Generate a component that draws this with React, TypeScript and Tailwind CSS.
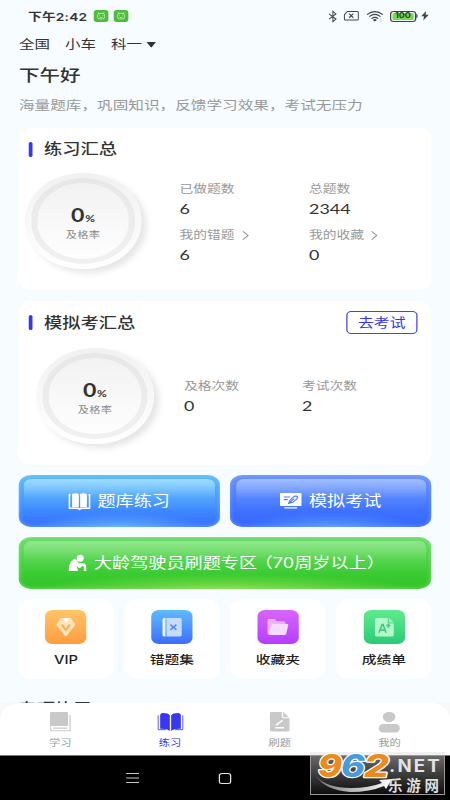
import type { ReactNode } from "react";

/* Drawing surface whose viewBox stretches to the size given by className. */
function Art({ box, className, children }: { box: string; className: string; children: ReactNode }) {
  return (
    <svg viewBox={box} preserveAspectRatio="none" fill="none" className={`block shrink-0 overflow-visible ${className}`}>
      {children}
    </svg>
  );
}

function StatusBar() {
  return (
    <div className="flex h-8 items-center pl-[22.4px] pr-[17px] text-[#333]">
      <span className="w-[48px] whitespace-nowrap pt-[2px] text-[11px] font-semibold leading-4 tracking-[0.15px]">下午2:42</span>
      {[0, 1].map((i) => (
        <Art key={i} box="0 0 44 36" className="ml-[4.4px] h-3 w-[11.7px]">
          <rect width="44" height="36" rx="9" fill="#4dbb3c" />
          <rect x="11" y="10" width="22" height="17" rx="7" stroke="#c9f5c0" strokeWidth="2.4" />
          <path d="M12 7l5 4M32 7l-5 4M17 16v3M27 16v3M18 22l4 1 4-1" stroke="#c9f5c0" strokeWidth="2.4" />
        </Art>
      ))}
      <div className="flex-1" />
      <Art box="0 0 24 34" className="h-[11px] w-[6.6px]">
        <path d="M1 9l20 16-9 8V1l9 8L1 25" stroke="#444" strokeWidth="3" />
      </Art>
      <Art box="0 0 46 28" className="ml-[5.4px] h-[9.4px] w-[12.2px]">
        <path d="M11 1.5h30q3 0 3 3v19q0 3-3 3H5q-3 0-3-3V11z" stroke="#444" strokeWidth="3" />
        <path d="M16 8l13 12M29 8L16 20" stroke="#444" strokeWidth="3.4" />
      </Art>
      <Art box="0 0 52 32" className="ml-[5.2px] h-[10.6px] w-[13.8px]">
        <path d="M2 11Q26-7 50 11M9 17Q26 4 43 17M16 23Q26 15 36 23" stroke="#444" strokeWidth="3.6" />
        <path d="M20 27q6-5 12 0l-6 5z" fill="#444" />
        <path d="M44 23v8M41 29l3 3 3-3" stroke="#aaa" strokeWidth="1.5" />
      </Art>
      <div className="ml-[5.4px] flex h-[11px] w-[20.6px] items-center justify-center rounded-[3px] border border-[#444] p-px">
        <div className="flex h-full w-full items-center justify-center rounded-[1.5px] bg-[#78d653] text-[7.2px] font-bold leading-none text-[#234a16]">100</div>
      </div>
      <div className="h-1 w-[1.6px] rounded-r bg-[#444]" />
      <Art box="0 0 22 28" className="ml-[2.8px] h-[9.4px] w-[6px]">
        <path d="M14 0L0 16h8L6 28 22 11h-9z" fill="#444" />
      </Art>
    </div>
  );
}

function Dial() {
  return (
    <div className="h-24 w-[93.6px] shrink-0 rounded-full bg-linear-to-b from-[#f1f1f1] to-white p-[5px] shadow-[4px_4px_6px_rgba(0,0,0,0.1)]">
      <div className="h-full w-full rounded-full bg-linear-to-b from-[#e7e7e7] to-[#f1f1f1] p-[5px]">
        <div className="flex h-full w-full flex-col items-center rounded-full bg-linear-to-b from-[#f2f2f2] to-[#fefefe] pt-[23px]">
          <div className="flex h-[18px] items-baseline font-[Lato] leading-[18px] text-[#333]">
            <span className="text-[18.5px] font-bold">0</span>
            <span className="ml-[0.5px] text-[9.5px] font-bold">%</span>
          </div>
          <div className="mt-[4px] text-[9px] leading-[14px] tracking-[0.2px] text-[#888]">及格率</div>
        </div>
      </div>
    </div>
  );
}

function Stat({ label, value, link }: { label: string; value: string; link?: boolean }) {
  return (
    <div>
      <div className="flex h-5 items-center text-[11px] leading-5 text-[#999]">
        {label}
        {link && (
          <Art box="0 0 18 28" className="ml-[6px] h-[9px] w-[5px]">
            <path d="M1 1l15 13L1 27" stroke="#999" strokeWidth="3.2" />
          </Art>
        )}
      </div>
      <div className="h-5 font-[Lato] text-[14.3px] leading-5 text-[#333]">{value}</div>
    </div>
  );
}

function CardTitle({ children }: { children: ReactNode }) {
  return (
    <div className="flex items-center">
      <div className="h-[15px] w-[2.8px] rounded-[1.5px] bg-[#3737ee]" />
      <h2 className="ml-[9.4px] text-[14.6px] font-medium leading-5 text-[#333]">{children}</h2>
    </div>
  );
}

function Glossy({ base, sheen, glow, rim, className, children }: { base: string; sheen: string; glow: string; rim: string; className: string; children: ReactNode }) {
  return (
    <div className={`relative flex h-[52px] items-center overflow-hidden rounded-[10px] text-white ${base} ${className}`}>
      <div className={`absolute inset-x-0 bottom-0 h-4 ${glow}`} />
      <div className={`absolute inset-0 rounded-[10px] ${rim}`} />
      <div className={`absolute inset-x-[4.5px] bottom-[6px] top-[4px] rounded-[6px] ${sheen}`} />
      <div className="relative flex items-center whitespace-nowrap text-[14.5px] leading-5">{children}</div>
    </div>
  );
}

function Tile({ label, tint, children }: { label: string; tint: string; children: ReactNode }) {
  return (
    <div className="flex h-20 flex-col items-center rounded-[11px] bg-white pt-[11px]">
      <div className={`flex h-[34px] w-[33px] items-center justify-center rounded-[6px] bg-linear-to-b ${tint}`}>{children}</div>
      <div className="mt-[6px] text-[11.8px] font-medium leading-5 text-[#222]">{label}</div>
    </div>
  );
}

function Tab({ label, active, children }: { label: string; active?: boolean; children: ReactNode }) {
  return (
    <div className={`flex w-[87.8px] flex-col items-center ${active ? "text-[#3737ee]" : "text-[#999]"}`}>
      <div className="flex h-[22px] items-center">{children}</div>
      <div className="mt-[3px] text-[9px] leading-[14px]">{label}</div>
    </div>
  );
}

function Watermark() {
  return (
    <svg viewBox="0 0 136 44" className="absolute left-[310px] top-[752px] h-[44px] w-[136px] overflow-visible">
      <defs>
        <linearGradient id="plate" x1="0" y1="0" x2="0" y2="1">
          <stop offset="0" stopColor="#6a6a6a" />
          <stop offset="1" stopColor="#0c0c0c" />
        </linearGradient>
        <linearGradient id="swoosh" x1="0" y1="0" x2="1" y2="0">
          <stop offset="0" stopColor="#777" />
          <stop offset="1" stopColor="#fff" />
        </linearGradient>
      </defs>
      <rect x="0.5" y="3.5" width="134" height="39" fill="url(#plate)" stroke="#999" />
      <rect x="0" y="0" width="135" height="3" fill="#f0f0f0" />
      <path d="M0 25Q10 37 35 37Q53 37 66 32L63 29L76 28L70 38L68 35Q54 41 34 41Q9 39 0 25z" fill="url(#swoosh)" transform="translate(6 -1)" />
      <g fontFamily="Inter" fontWeight="800" fontStyle="italic" fontSize="31" stroke="#fff" strokeWidth="2.4" paintOrder="stroke" strokeLinejoin="round">
        <text x="8" y="25" textLength="24" lengthAdjust="spacingAndGlyphs" fill="#ee8a1d">9</text>
        <text x="31" y="25" textLength="24" lengthAdjust="spacingAndGlyphs" fill="#4a9bd9">6</text>
        <text x="54" y="25" textLength="25" lengthAdjust="spacingAndGlyphs" fill="#ee8a1d">2</text>
      </g>
      <text x="79" y="20" textLength="53" lengthAdjust="spacingAndGlyphs" fontFamily="Inter" fontWeight="700" fontSize="17" letterSpacing="2" fill="#e3e3e3">.NET</text>
      <text x="78" y="38.5" textLength="51" fontFamily="Noto Sans CJK SC" fontWeight="700" fontSize="14.5" fill="#dedede">乐游网</text>
    </svg>
  );
}

export default function App() {
  return (
    <div className="relative h-[800px] w-[450px] overflow-hidden bg-[#f6fcff] font-[Inter,'Noto_Sans_CJK_SC',sans-serif]">
      <div className="flex h-[800px] w-[360px] origin-top-left scale-x-125 flex-col">
        <StatusBar />
        <header className="px-[15.2px] text-[#333]">
          <div className="flex h-[26px] items-center text-[12.4px] leading-[26px]">
            <span>全国</span>
            <span className="ml-[12px]">小车</span>
            <span className="ml-[12px]">科一</span>
            <Art box="0 0 30 16" className="ml-[3px] h-[5.4px] w-[8px]">
              <path d="M1 0h28L17 15q-2 2-4 0z" fill="#333" />
            </Art>
          </div>
          <h1 className="h-[34px] text-[16.4px] font-medium leading-[34px]">下午好</h1>
          <p className="h-9 whitespace-nowrap pt-[3px] text-[12.5px] leading-[22px] text-[#999]">海量题库，巩固知识，反馈学习效果，考试无压力</p>
        </header>

        <main className="flex flex-1 flex-col px-[14.8px]">
          <section className="h-[162px] rounded-[10px] bg-white pl-[8.2px] pt-[11px]">
            <CardTitle>练习汇总</CardTitle>
            <div className="-ml-[3.4px] mt-[14px] flex">
              <Dial />
              <div className="ml-[30.5px] grid h-fit grid-cols-[103.6px_1fr] gap-y-[6px] pt-[6px]">
                <Stat label="已做题数" value="6" />
                <Stat label="总题数" value="2344" />
                <Stat label="我的错题" value="6" link />
                <Stat label="我的收藏" value="0" link />
              </div>
            </div>
          </section>

          <section className="mt-[11px] h-[164px] rounded-[10px] bg-white pl-[8.2px] pt-[10px]">
            <div className="flex h-[23px] items-center justify-between pr-[11px]">
              <CardTitle>模拟考汇总</CardTitle>
              <button className="h-[23px] w-[57.6px] rounded-[4px] border border-[#4545e6] text-[12.7px] leading-[21px] text-[#3737ee]">去考试</button>
            </div>
            <div className="ml-[6.2px] mt-[14px] flex">
              <Dial />
              <div className="ml-[24.4px] grid grid-cols-[94.4px_1fr] pt-[28px]">
                <Stat label="及格次数" value="0" />
                <Stat label="考试次数" value="2" />
              </div>
            </div>
          </section>

          <div className="mt-[10px] grid grid-cols-2 gap-[8px]">
            <Glossy
              className="justify-center"
              base="bg-linear-to-b from-[#5cbcf8] via-[#4393ff] via-55% to-[#376cff]"
              glow="bg-[radial-gradient(ellipse_at_bottom,#5cacff_0%,transparent_62%)]"
              rim="shadow-[inset_0_0_5px_rgba(150,210,255,0.6)]"
              sheen="bg-linear-to-b from-[#9fdcff] via-[#6cb8ff]/30 via-45% to-transparent to-75%"
            >
              <Art box="0 0 64 50" className="mr-[6px] h-[17px] w-[17.2px]">
                <path d="M10 3Q20-1 30 3V43Q20 39 10 43zM34 3Q44-1 54 3V43Q44 39 34 43z" fill="#fff" />
                <path d="M5 5H2V45H23Q29 45 32 48Q35 45 41 45H62V5H59" stroke="#fff" strokeWidth="4.600" />
              </Art>
              题库练习
            </Glossy>
            <Glossy
              className="justify-center"
              base="bg-linear-to-b from-[#6a92f9] via-[#4377ff] via-55% to-[#3465ff]"
              glow="bg-[radial-gradient(ellipse_at_bottom,#5598ff_0%,transparent_62%)]"
              rim="shadow-[inset_0_0_5px_rgba(150,185,255,0.6)]"
              sheen="bg-linear-to-b from-[#a0bdff] via-[#739cff]/30 via-45% to-transparent to-75%"
            >
              <Art box="0 0 64 48" className="mr-[6px] h-4 w-[17.2px]">
                <rect width="64" height="39" rx="2" fill="#fff" />
                <path d="M13 44.500H51" stroke="#fff" strokeWidth="4" />
                <path d="M11 12H30M11 20H23M26 31L30 21L44 9L52 10L51 17L38 28zM26 31L42 17" stroke="#4b7dfa" strokeWidth="3.4" />
              </Art>
              模拟考试
            </Glossy>
          </div>

          <Glossy
            className="mt-[10px] pl-[40px]"
            base="bg-linear-to-b from-[#68dc67] via-[#42cf3a] via-55% to-[#2dc323]"
            glow="bg-[radial-gradient(ellipse_at_bottom,#84dd4c_0%,transparent_66%)]"
            rim="shadow-[inset_0_0_5px_rgba(165,240,150,0.65)]"
            sheen="bg-linear-to-b from-[#91e78c] via-[#6bdb66]/30 via-45% to-transparent to-75%"
          >
            <Art box="0 0 52 48" className="mr-[6.4px] h-4 w-[14px]">
              <circle cx="34" cy="10" r="10.5" fill="#fff" />
              <path d="M0 48V42Q1 22 15 12Q20 9 24 16L30 25H42Q52 26 52 35V48H45V37Q44 33 40 33L34 39Q30 40 27 36L23 32L27 44V48z" fill="#fff" />
            </Art>
            大龄驾驶员刷题专区<span className="-ml-[2px]">（70周岁以上）</span>
          </Glossy>

          <div className="mt-[10px] grid grid-cols-4 gap-[8.8px]">
            <Tile label="VIP" tint="from-[#ffc568] to-[#ff9c3f]">
              <Art box="0 0 60 56" className="h-[18.4px] w-[15.4px]">
                <path d="M15 0H45L60 20L33 54Q30 57 27 54L0 20z" fill="#ffe4bd" />
                <path d="M20 0H40L30 14z" fill="#fff" />
                <path d="M17 20L30 37L43 20" stroke="#ffac4d" strokeWidth="6" />
              </Art>
            </Tile>
            <Tile label="错题集" tint="from-[#60baff] to-[#3f6cff]">
              <Art box="0 0 58 56" className="h-[18.4px] w-[15.4px]">
                <path d="M5 0H9V56H5Q0 56 0 51V5Q0 0 5 0z" fill="#edf6ff" />
                <path d="M12 0H53Q58 0 58 5V51Q58 56 53 56H12z" fill="#c5dcff" />
                <path d="M24 20L42 36M42 20L24 36" stroke="#4e8fff" strokeWidth="5" />
              </Art>
            </Tile>
            <Tile label="收藏夹" tint="from-[#d864ff] to-[#b63cff]">
              <Art box="0 0 62 48" className="h-4 w-[16.6px]">
                <path d="M0 46V4Q0 0 4 0H22L27 7H50Q54 7 54 12V20H15L6 47z" fill="#eab1ff" />
                <path d="M17 15H59Q63 15 62 19L56 44Q55 48 51 48H8Q4 48 5 44L12 19Q13 15 17 15z" fill="#f6dcff" />
              </Art>
            </Tile>
            <Tile label="成绩单" tint="from-[#5cec8b] to-[#2acb79]">
              <Art box="0 0 56 56" className="h-[18.4px] w-[15px]">
                <path d="M4 0H38V12Q38 17 43 17H56V52Q56 56 52 56H4Q0 56 0 52V4Q0 0 4 0zM42 0L56 13H45Q42 13 42 10z" fill="#b5f8cc" />
                <path d="M12 45L21 20H24L33 45M15 37H30M40 17V30M34 23H46" stroke="#3dcc7d" strokeWidth="5" />
              </Art>
            </Tile>
          </div>

          <div className="h-6 overflow-hidden pt-[20px] text-[14.6px] font-medium leading-5 text-[#333]">专项练习</div>
        </main>

        <div className="shrink-0 bg-[#f8f8f8]">
          <nav className="flex h-[52px] rounded-t-[16px] bg-white pl-[4.4px] pt-[8px]">
            <Tab label="学习">
              <Art box="0 0 63 58" className="h-[19.4px] w-[16.8px]">
                <path d="M4 0H50Q54 0 54 4V42H0V4Q0 0 4 0z" fill="#c9c9c9" />
                <path d="M60 9V56H6Q2 56 2 52V45M10 48H52" stroke="#c9c9c9" strokeWidth="3.5" />
              </Art>
            </Tab>
            <Tab label="练习" active>
              <Art box="0 0 78 54" className="h-[18px] w-[20.8px]">
                <path d="M8 5Q10 0 16 0Q32 0 37 7V54Q28 46 8 47zM70 5Q68 0 62 0Q46 0 41 7V54Q50 46 70 47z" fill="#3737f5" />
                <path d="M2 7V50H25M76 7V50H53" stroke="#5858f7" strokeWidth="3" />
              </Art>
            </Tab>
            <Tab label="刷题">
              <Art box="0 0 58 58" className="h-[19.4px] w-[15.6px]">
                <path d="M4 0H35V13Q35 19 41 19H58V54Q58 58 54 58H4Q0 58 0 54V4Q0 0 4 0zM39 0L56 16H43Q39 16 39 12z" fill="#c9c9c9" />
                <path d="M18 39L37 25M16 47H42" stroke="#fff" strokeWidth="4.5" />
              </Art>
            </Tab>
            <Tab label="我的">
              <Art box="0 0 63 62" className="h-[20.6px] w-[16.8px]">
                <ellipse cx="31" cy="15" rx="19" ry="15.5" fill="#c9c9c9" />
                <rect y="36" width="63" height="26" rx="13" fill="#c9c9c9" />
              </Art>
            </Tab>
          </nav>
        </div>
        <div className="flex h-[45px] shrink-0 items-center border-t border-[#777] bg-black pl-[100.6px]">
          <Art box="0 0 38 30" className="h-[10px] w-[10.2px]">
            <path d="M0 1.5H38M0 15H38M0 28.5H38" stroke="#d8d8d8" strokeWidth="2.8" />
          </Art>
          <div className="ml-[64px] h-[11px] w-[10.4px] rounded-[2.5px] border border-[#e5e5e5]" />
        </div>
      </div>
      <Watermark />
    </div>
  );
}
